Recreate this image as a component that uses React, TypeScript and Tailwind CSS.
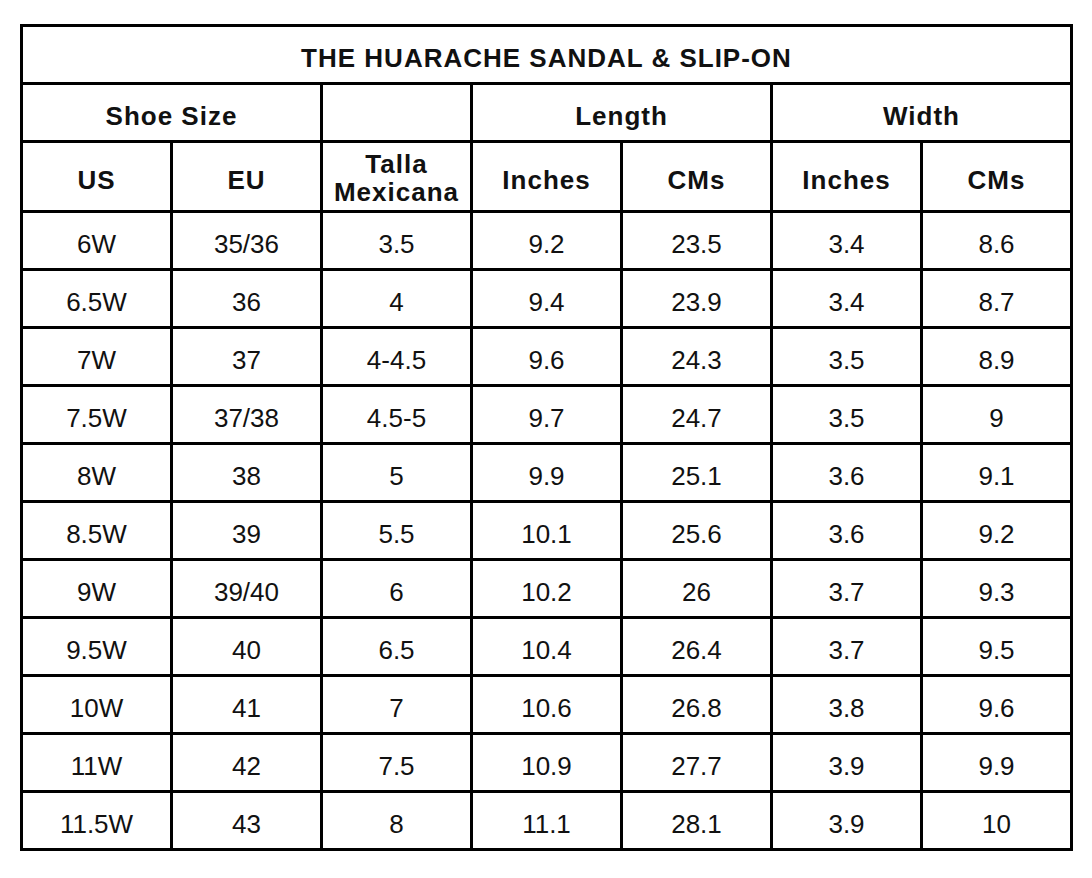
import React from 'react';

// Size chart rows: US, EU, Talla Mexicana, length in / cm, width in / cm
const rows: string[][] = [
  ['6W', '35/36', '3.5', '9.2', '23.5', '3.4', '8.6'],
  ['6.5W', '36', '4', '9.4', '23.9', '3.4', '8.7'],
  ['7W', '37', '4-4.5', '9.6', '24.3', '3.5', '8.9'],
  ['7.5W', '37/38', '4.5-5', '9.7', '24.7', '3.5', '9'],
  ['8W', '38', '5', '9.9', '25.1', '3.6', '9.1'],
  ['8.5W', '39', '5.5', '10.1', '25.6', '3.6', '9.2'],
  ['9W', '39/40', '6', '10.2', '26', '3.7', '9.3'],
  ['9.5W', '40', '6.5', '10.4', '26.4', '3.7', '9.5'],
  ['10W', '41', '7', '10.6', '26.8', '3.8', '9.6'],
  ['11W', '42', '7.5', '10.9', '27.7', '3.9', '9.9'],
  ['11.5W', '43', '8', '11.1', '28.1', '3.9', '10'],
];

const Cell: React.FC<{ className?: string; children?: React.ReactNode }> = ({ className = '', children }) => (
  <div className={`bg-white flex items-center justify-center text-center ${className}`}>
    {children}
  </div>
);

const Head: React.FC<{ className?: string; children?: React.ReactNode }> = ({ className = '', children }) => (
  <Cell className={`font-bold tracking-[1px] pt-[7px] ${className}`}>{children}</Cell>
);

const App: React.FC = () => {
  return (
    <div
      className="min-h-[878px] bg-white pt-[24px] pl-[20px] text-[26px] text-[#111]"
      style={{ fontFamily: '"Liberation Sans", Arial, sans-serif' }}
    >
      <div className="grid w-fit grid-cols-[repeat(7,147px)] grid-rows-[55px_55px_67px_repeat(11,55px)] gap-[3px] bg-black p-[3px]">
        <Head className="col-span-7">THE HUARACHE SANDAL &amp; SLIP-ON</Head>

        <Head className="col-span-2">Shoe Size</Head>
        <Cell />
        <Head className="col-span-2">Length</Head>
        <Head className="col-span-2">Width</Head>

        <Head>US</Head>
        <Head>EU</Head>
        <Cell className="flex-col font-bold tracking-[1px] leading-[28px] pt-[2px]">
          <span>Talla</span>
          <span>Mexicana</span>
        </Cell>
        <Head>Inches</Head>
        <Head>CMs</Head>
        <Head>Inches</Head>
        <Head>CMs</Head>

        {rows.map((row, i) =>
          row.map((value, j) => (
            <Cell key={`${i}-${j}`} className="pt-[8px]">
              {value}
            </Cell>
          ))
        )}
      </div>
    </div>
  );
};

export default App;
